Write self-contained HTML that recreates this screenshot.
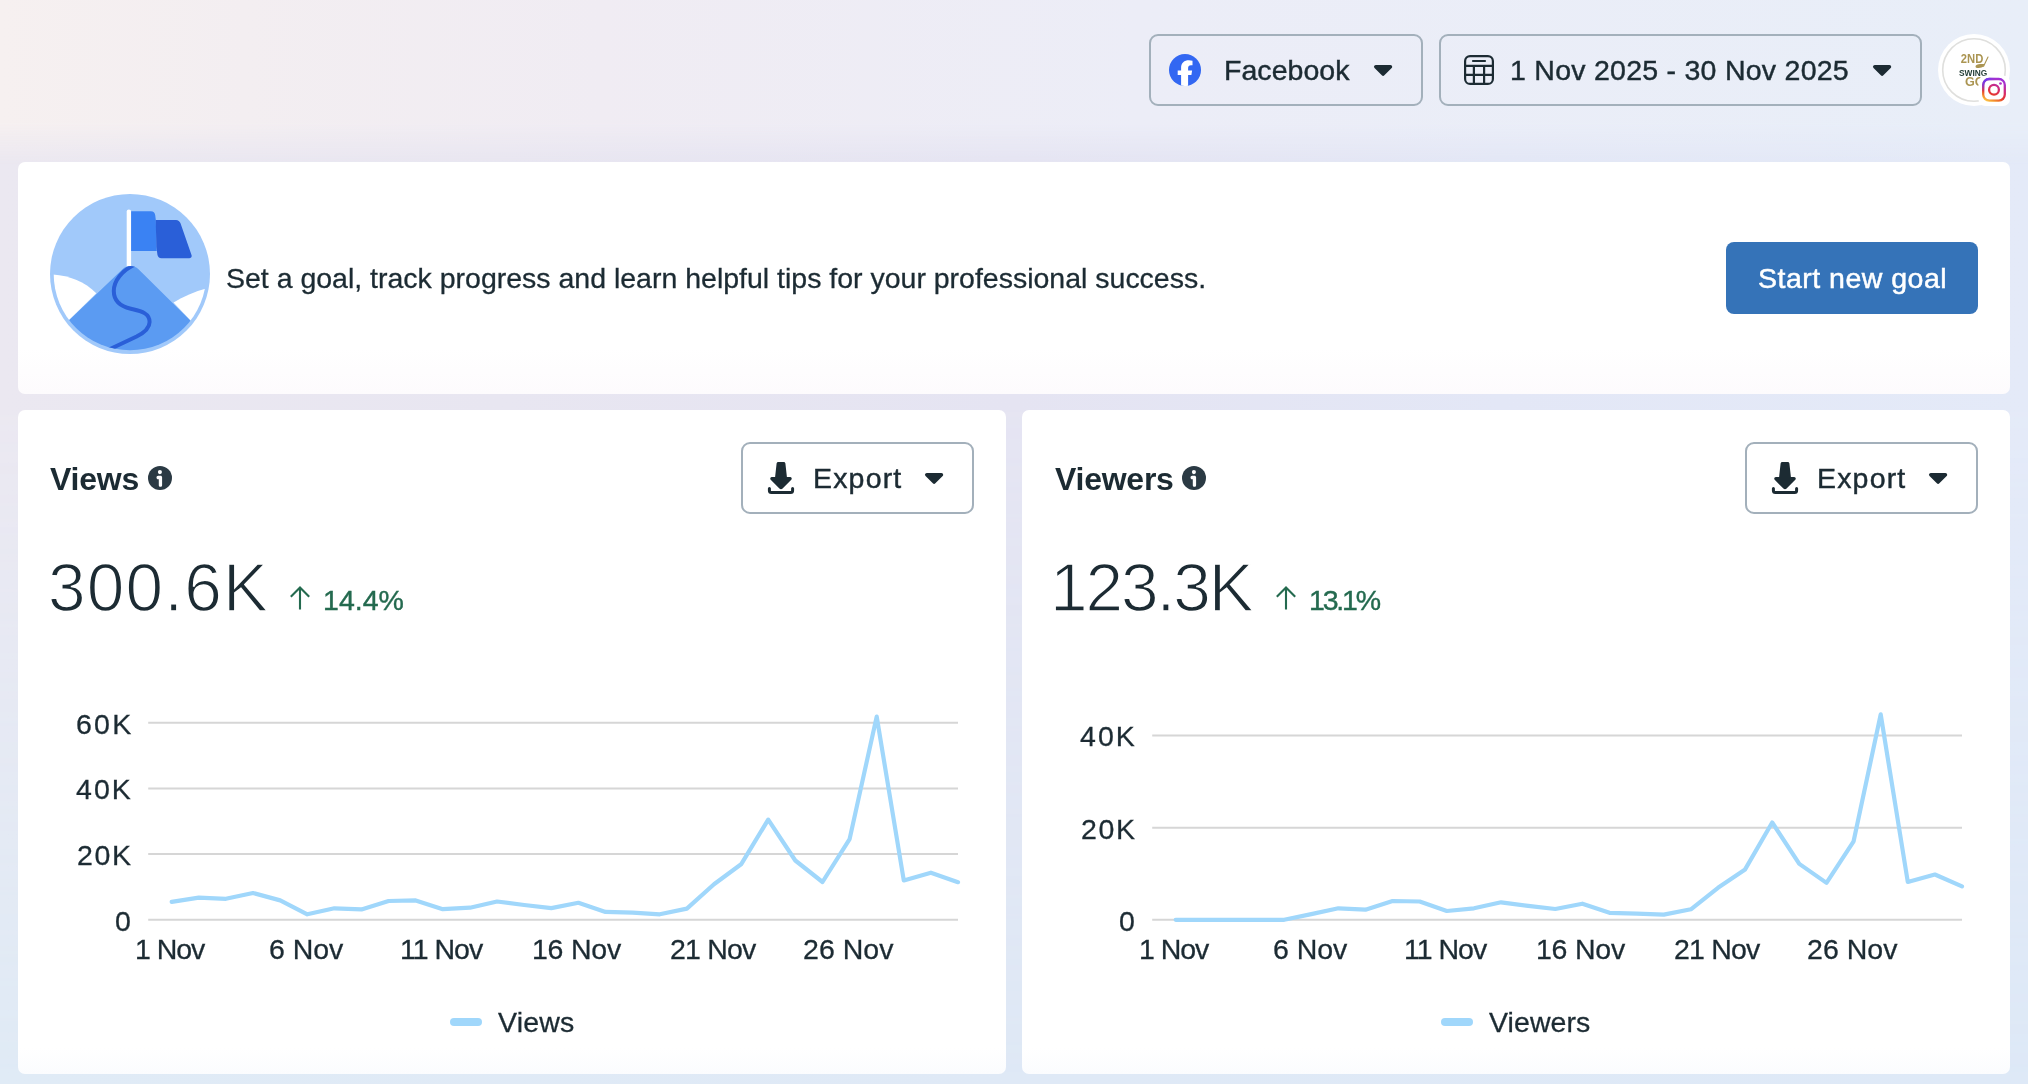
<!DOCTYPE html>
<html lang="en">
<head>
<meta charset="utf-8">
<title>Insights</title>
<style>
*{box-sizing:border-box;margin:0;padding:0}
html,body{width:2028px;height:1084px;overflow:hidden}
body{position:relative;font-family:"Liberation Sans",sans-serif;color:#1c2b33;background:#e6e6f3}
.bg{position:absolute;left:0;top:0;width:2028px;height:1084px}
#bgB{background:linear-gradient(90deg,rgb(224,235,246) 0,rgb(223,233,246) 50%,rgb(222,233,247) 100%)}
#bgM{background:linear-gradient(90deg,rgb(235,232,241) 0,rgb(232,230,241) 24.600%,rgb(229,228,242) 50%,rgb(227,231,246) 74%,rgb(228,234,248) 100%);
 -webkit-mask-image:linear-gradient(180deg,#000 0,#000 400px,rgba(0,0,0,0) 1084px);mask-image:linear-gradient(180deg,#000 0,#000 400px,rgba(0,0,0,0) 1084px)}
#bgT{height:170px;background:linear-gradient(90deg,rgb(246,240,240) 0,rgb(243,238,241) 12%,rgb(240,236,243) 29.600%,rgb(236,237,247) 56.200%,rgb(232,238,248) 100%);
 -webkit-mask-image:linear-gradient(180deg,#000 0,#000 122px,rgba(0,0,0,0) 165px);mask-image:linear-gradient(180deg,#000 0,#000 122px,rgba(0,0,0,0) 165px)}
.abs{position:absolute}
.t{position:absolute;white-space:nowrap;line-height:1;will-change:transform}
.card{position:absolute;background:linear-gradient(180deg,#fff 0,#fff calc(100% - 26px),#fbfcfe 100%);border-radius:7px}
.btn{position:absolute;border:2px solid #a3b0bb;border-radius:9px}
svg{position:absolute;overflow:visible}
.b{font-weight:700}
.m{-webkit-text-stroke:.45px #1c2b33}
.r{-webkit-text-stroke:.3px #1c2b33}
.g{color:#246a4f;-webkit-text-stroke:.4px #246a4f}
.big{-webkit-text-stroke:1.5px #fff}
</style>
</head>
<body>
<div class="bg" id="bgB"></div><div class="bg" id="bgM"></div><div class="bg" id="bgT"></div>
<div class="btn" id="fbbtn" style="left:1149px;top:34px;width:274px;height:72px"></div>
<svg id="fbicon" style="left:1169px;top:54px" width="32" height="32" viewBox="0 0 32 32">
 <circle cx="16" cy="16" r="16" fill="#3267f2"/>
 <path fill="#fff" d="M19.100 31.700V21h3.300l.7-4.400h-4v-2.500c0-1.800.8-2.900 2.900-2.900h1.500V6.700c-.9-.2-2.300-.5-3.600-.5-4.600 0-7.800 2.600-7.800 7.300v3.100H8.700V21h3.400v10.500c1.100.3 2.300.5 3.500.5s2.400-.1 3.500-.3z"/>
</svg>
<span class="t m" id="t_fb" style="left:1224.00px;top:55.77px;font-size:28.5px;letter-spacing:0.051px;">Facebook</span>
<svg class="caret" style="left:1373.8px;top:65.3px" width="19" height="11" viewBox="0 0 19 11"><path fill="#1c2b33" stroke="#1c2b33" stroke-width="3.600" stroke-linejoin="round" d="M1.800 1.800H16.400L9.100 9.100z"/></svg>
<div class="btn" id="datebtn" style="left:1439px;top:34px;width:483px;height:72px"></div>
<svg id="calicon" style="left:1463px;top:54px" width="32" height="32" viewBox="0 0 32 32" fill="none" stroke="#1c2b33" stroke-width="2.200" stroke-linecap="round">
 <rect x="2.100" y="2.100" width="27.800" height="27.800" rx="5"/>
 <path d="M10 7h12M2.100 11.900h27.800M2.100 20.800h27.800M10.900 11.900v18M21.100 11.900v18"/>
</svg>
<span class="t m" id="t_date" style="left:1510.00px;top:55.67px;font-size:28.5px;letter-spacing:0.260px;">1 Nov 2025 - 30 Nov 2025</span>
<svg class="caret" style="left:1872.7px;top:65.3px" width="19" height="11" viewBox="0 0 19 11"><path fill="#1c2b33" stroke="#1c2b33" stroke-width="3.600" stroke-linejoin="round" d="M1.800 1.800H16.400L9.100 9.100z"/></svg>
<svg id="avatar" style="left:1938px;top:34px;will-change:transform" width="72" height="72" viewBox="0 0 72 72">
 <defs>
  <linearGradient id="ig1" gradientUnits="userSpaceOnUse" x1="44.1" y1="67.8" x2="55.9" y2="41.2">
   <stop offset=".083" stop-color="#fdc850"/><stop offset=".167" stop-color="#f5a030"/><stop offset=".275" stop-color="#ef6a2c"/><stop offset=".375" stop-color="#e4352f"/><stop offset=".54" stop-color="#dc2f5c"/><stop offset=".71" stop-color="#c42a90"/><stop offset=".83" stop-color="#b030c0"/><stop offset="1" stop-color="#9c30dc"/>
  </linearGradient>
  <radialGradient id="ig2" gradientUnits="userSpaceOnUse" cx="44.1" cy="43.9" r="14">
   <stop offset="0" stop-color="#6238fa" stop-opacity="1"/><stop offset=".45" stop-color="#6a3df8" stop-opacity=".8"/><stop offset="1" stop-color="#7a3df0" stop-opacity="0"/>
  </radialGradient>
 </defs>
 <circle cx="36" cy="36" r="36" fill="#fff"/>
 <circle cx="36" cy="36" r="31.300" fill="none" stroke="#dfdfdd" stroke-width="1.600"/>
 <text x="22.800" y="29" font-family="Liberation Sans, sans-serif" font-weight="700" font-size="13" fill="#ab9552" textLength="22.500" lengthAdjust="spacingAndGlyphs">2ND</text>
 <path d="M50 23 45.600 32.300" stroke="#ab9552" stroke-width="1.100" fill="none" stroke-linecap="round"/>
 <path d="M37.500 32.400c0-1.600 2.500-2.500 5-2.400l3.800.1-.8 2.500c-1 .9-3.200 1.500-5.300 1.400-1.600-.1-2.700-.6-2.700-1.600z" fill="#ab9552"/>
 <text x="21" y="41.700" font-family="Liberation Sans, sans-serif" font-weight="700" font-size="9" fill="#1f3a33" textLength="28.200" lengthAdjust="spacingAndGlyphs">SWING</text>
 <text x="27" y="51.600" font-family="Liberation Sans, sans-serif" font-weight="700" font-size="12.600" fill="#ab9552">GC</text>
 <rect x="40.400" y="41.400" width="31.600" height="30.600" rx="7" fill="#fff"/>
 <g fill="none" stroke-width="2.300">
  <rect x="45.200" y="45" width="21.600" height="21.600" rx="6" stroke="url(#ig1)"/>
  <circle cx="56" cy="55.800" r="4.900" stroke="url(#ig1)"/>
  <rect x="45.200" y="45" width="21.600" height="21.600" rx="6" stroke="url(#ig2)"/>
 </g>
 <circle cx="62.500" cy="49.500" r="1.350" fill="#b030c8"/>
</svg>

<div class="card" id="banner" style="left:18px;top:162px;width:1992px;height:232px;background:linear-gradient(180deg,#fff 0,#fff 80%,#fdfbfd 100%)"></div>
<svg id="illus" style="left:50px;top:194px" width="160" height="160" viewBox="0 0 160 160">
 <defs><clipPath id="cin"><circle cx="80" cy="80" r="76.300"/></clipPath>
 <clipPath id="cmt"><path d="M-10 154 72.500 75.200c4.500-4.300 11.500-4.300 16 0L170 156v10H-10z"/></clipPath></defs>
 <circle cx="80" cy="80" r="80" fill="#a1c9fa"/>
 <g clip-path="url(#cin)">
  <path fill="#fff" d="M0 80.300C18 81 34 87 46.300 99.200L18 127 0 127z"/>
  <path fill="#fff" d="M160 93.500C146 97 134 102 123.500 108.500L142 128h18z"/>
  <rect x="76.700" y="15.400" width="4.400" height="60" rx="2.200" fill="#fff"/>
  <path fill="#5b9bf2" d="M-10 154 72.500 75.200c4.500-4.300 11.500-4.300 16 0L170 156v10H-10z"/>
  <g clip-path="url(#cmt)"><path fill="none" stroke="#2a5fd8" stroke-width="4" d="M86 70C72 76 63.800 87 63.800 97c0 10 6.500 15.300 17 17.800 9 2.200 18.800 3.700 18.800 13.200 0 7-6 11-13 14.500L58 156"/></g>
 </g>
 <path fill="#3a82f3" d="M81.100 17.300h19.800c2.500 0 3.900 1.600 4.300 4l.6 4.600.9 31.200H81.100z"/>
 <path fill="#2a5fd8" d="M105.700 25.900h20.300c2.200 0 3.700 1.300 4.500 3.400l11 31.700c.6 1.700-.4 3.200-2.200 3.200h-27.900c-2.200 0-3.700-1.500-4-3.700l-1-7.600z"/>
</svg>
<span class="t r" id="t_banner" style="left:226.00px;top:264.27px;font-size:28.5px;letter-spacing:-0.006px;">Set a goal, track progress and learn helpful tips for your professional success.</span>
<div class="abs" id="goalbtn" style="left:1726px;top:242px;width:252px;height:72px;border-radius:8px;background:#3573b8"></div>
<span class="t " id="t_goal" style="left:1758.00px;top:264.27px;font-size:28.5px;letter-spacing:0.493px;color:#fff;-webkit-text-stroke:.5px #fff;">Start new goal</span>
<div class="card" id="card_v" style="left:18px;top:410px;width:988px;height:664px"></div>
<span class="t b" id="t_v" style="left:50.00px;top:462.81px;font-size:32px;letter-spacing:-0.232px;">Views</span>
<svg class="info" style="left:148px;top:466px" width="24" height="24" viewBox="0 0 24 24"><circle cx="12" cy="12" r="12" fill="#2b3a44"/><circle cx="11.900" cy="6.100" r="2.050" fill="#fff"/><path fill="#fff" d="M10.200 9.700h2.300c.9 0 1.600.7 1.600 1.600v7.900c0 .9-.75 1.650-1.650 1.650S10.800 20.100 10.800 19.200v-5.900h-.6c-1 0-1.700-.8-1.700-1.800s.7-1.800 1.700-1.800z"/></svg>
<div class="btn" style="left:741px;top:442px;width:233px;height:72px"></div>
<svg class="dl" style="left:766px;top:460px" width="32" height="36" viewBox="0 0 32 36"><path fill="#1c2b33" d="M12.300 2h5.400c.9 0 1.600.6 1.700 1.500L20.900 17h3.200c1.500 0 2.200 1.700 1.200 2.800l-8.700 8.800c-.9.9-2.300.9-3.200 0l-8.700-8.800c-1-1.100-.3-2.800 1.200-2.800h3.200l1.500-13.500c.1-.9.800-1.500 1.700-1.500z"/><path fill="none" stroke="#1c2b33" stroke-width="3" stroke-linecap="round" stroke-linejoin="round" d="M3.400 28.400v2.100c0 1.100.9 2 2 2h19.200c1.100 0 2-.9 2-2v-2.100"/></svg>
<span class="t m" id="t_exp_v" style="left:813.00px;top:463.87px;font-size:28.5px;letter-spacing:1.175px;">Export</span>
<svg class="caret" style="left:924.9px;top:473.1px" width="19" height="11" viewBox="0 0 19 11"><path fill="#1c2b33" stroke="#1c2b33" stroke-width="3.600" stroke-linejoin="round" d="M1.800 1.800H16.400L9.100 9.100z"/></svg>
<span class="t big" id="t_big_v" style="left:48.00px;top:553.53px;font-size:67.6px;letter-spacing:1.195px;">300.6K</span>
<svg style="left:289px;top:585px" width="22" height="26" viewBox="0 0 22 26" fill="none" stroke="#246a4f" stroke-width="2.100" stroke-linejoin="miter"><path d="M11 2.800v21.800M1.800 11.800 11 2.600l9.200 9.200"/></svg>
<span class="t g" id="t_pct_v" style="left:323.00px;top:585.77px;font-size:28.5px;letter-spacing:0.032px;">14.4%</span>
<svg id="chart_v" style="left:0;top:0" width="2028" height="1084" viewBox="0 0 2028 1084"><path d="M148.2 722.8H958.0" stroke="#d6d6d6" stroke-width="2"/><path d="M148.2 788.5H958.0" stroke="#d6d6d6" stroke-width="2"/><path d="M148.2 854.1H958.0" stroke="#d6d6d6" stroke-width="2"/><path d="M148.2 919.7H958.0" stroke="#d6d6d6" stroke-width="2"/><polyline points="171.7,901.9 198.8,897.7 225.9,898.8 253.0,893.0 280.2,900.4 307.3,914.3 334.4,908.3 361.5,909.4 388.6,901.0 415.7,900.4 442.8,909.2 470.0,907.7 497.1,901.5 524.2,905.0 551.3,908.1 578.4,902.8 605.5,911.9 632.7,912.6 659.8,914.3 686.9,908.6 714.0,884.2 741.1,864.3 768.2,819.6 795.3,860.5 822.5,882.0 849.6,839.1 876.7,716.6 903.8,880.5 930.9,872.7 958.0,882.2" fill="none" stroke="#a0d7fb" stroke-width="4.200" stroke-linejoin="round" stroke-linecap="round"/></svg>
<span class="t r" id="t_y60K_v" style="left:76.00px;top:709.67px;font-size:28.5px;letter-spacing:2.242px;">60K</span>
<span class="t r" id="t_y40K_v" style="left:76.00px;top:775.37px;font-size:28.5px;letter-spacing:2.076px;">40K</span>
<span class="t r" id="t_y20K_v" style="left:77.00px;top:840.97px;font-size:28.5px;letter-spacing:1.663px;">20K</span>
<span class="t r" id="t_y0_v" style="left:115.00px;top:906.57px;font-size:28.5px;letter-spacing:0.000px;">0</span>
<span class="t r" id="t_x0_v" style="left:135.00px;top:934.57px;font-size:28.5px;letter-spacing:-1.031px;">1 Nov</span>
<span class="t r" id="t_x1_v" style="left:269.00px;top:934.57px;font-size:28.5px;letter-spacing:-0.065px;">6 Nov</span>
<span class="t r" id="t_x2_v" style="left:400.00px;top:934.57px;font-size:28.5px;letter-spacing:-1.011px;">11 Nov</span>
<span class="t r" id="t_x3_v" style="left:532.00px;top:934.57px;font-size:28.5px;letter-spacing:-0.233px;">16 Nov</span>
<span class="t r" id="t_x4_v" style="left:670.00px;top:934.57px;font-size:28.5px;letter-spacing:-0.806px;">21 Nov</span>
<span class="t r" id="t_x5_v" style="left:803.00px;top:934.57px;font-size:28.5px;letter-spacing:0.040px;">26 Nov</span>
<div class="abs" style="left:450px;top:1018px;width:32px;height:8px;border-radius:4px;background:#a0d7fb"></div>
<span class="t r" id="t_lg_v" style="left:498.00px;top:1007.77px;font-size:28.5px;letter-spacing:0.186px;">Views</span>
<div class="card" id="card_w" style="left:1022px;top:410px;width:988px;height:664px"></div>
<span class="t b" id="t_w" style="left:1055.00px;top:462.81px;font-size:32px;letter-spacing:-0.250px;">Viewers</span>
<svg class="info" style="left:1182.3px;top:466px" width="24" height="24" viewBox="0 0 24 24"><circle cx="12" cy="12" r="12" fill="#2b3a44"/><circle cx="11.900" cy="6.100" r="2.050" fill="#fff"/><path fill="#fff" d="M10.200 9.700h2.300c.9 0 1.600.7 1.600 1.600v7.900c0 .9-.75 1.650-1.650 1.650S10.800 20.100 10.800 19.200v-5.900h-.6c-1 0-1.700-.8-1.700-1.800s.7-1.800 1.700-1.800z"/></svg>
<div class="btn" style="left:1745px;top:442px;width:233px;height:72px"></div>
<svg class="dl" style="left:1770px;top:460px" width="32" height="36" viewBox="0 0 32 36"><path fill="#1c2b33" d="M12.300 2h5.400c.9 0 1.600.6 1.700 1.500L20.900 17h3.200c1.500 0 2.200 1.700 1.200 2.800l-8.700 8.800c-.9.9-2.300.9-3.200 0l-8.700-8.800c-1-1.100-.3-2.800 1.200-2.800h3.200l1.500-13.500c.1-.9.800-1.500 1.700-1.500z"/><path fill="none" stroke="#1c2b33" stroke-width="3" stroke-linecap="round" stroke-linejoin="round" d="M3.400 28.400v2.100c0 1.100.9 2 2 2h19.200c1.100 0 2-.9 2-2v-2.100"/></svg>
<span class="t m" id="t_exp_w" style="left:1817.00px;top:463.87px;font-size:28.5px;letter-spacing:1.175px;">Export</span>
<svg class="caret" style="left:1928.9px;top:473.1px" width="19" height="11" viewBox="0 0 19 11"><path fill="#1c2b33" stroke="#1c2b33" stroke-width="3.600" stroke-linejoin="round" d="M1.800 1.800H16.400L9.100 9.100z"/></svg>
<span class="t big" id="t_big_w" style="left:1050.00px;top:553.53px;font-size:67.6px;letter-spacing:-2.068px;">123.3K</span>
<svg style="left:1275px;top:585px" width="22" height="26" viewBox="0 0 22 26" fill="none" stroke="#246a4f" stroke-width="2.100" stroke-linejoin="miter"><path d="M11 2.800v21.800M1.800 11.800 11 2.600l9.200 9.200"/></svg>
<span class="t g" id="t_pct_w" style="left:1309.00px;top:585.77px;font-size:28.5px;letter-spacing:-2.190px;">13.1%</span>
<svg id="chart_w" style="left:0;top:0" width="2028" height="1084" viewBox="0 0 2028 1084"><path d="M1152.2 735.5H1962.0" stroke="#d6d6d6" stroke-width="2"/><path d="M1152.2 827.8H1962.0" stroke="#d6d6d6" stroke-width="2"/><path d="M1152.2 919.7H1962.0" stroke="#d6d6d6" stroke-width="2"/><polyline points="1175.7,919.8 1202.8,919.8 1229.9,919.8 1257.0,919.8 1284.2,919.8 1311.3,914.1 1338.4,908.3 1365.5,909.7 1392.6,901.0 1419.7,901.5 1446.8,911.0 1474.0,908.3 1501.1,902.3 1528.2,905.9 1555.3,909.0 1582.4,903.7 1609.5,912.8 1636.7,913.7 1663.8,914.6 1690.9,909.3 1718.0,887.8 1745.1,869.4 1772.2,822.5 1799.3,863.9 1826.5,882.9 1853.6,841.3 1880.7,714.4 1907.8,882.0 1934.9,874.5 1962.0,886.4" fill="none" stroke="#a0d7fb" stroke-width="4.200" stroke-linejoin="round" stroke-linecap="round"/></svg>
<span class="t r" id="t_y40K_w" style="left:1080.00px;top:722.37px;font-size:28.5px;letter-spacing:2.076px;">40K</span>
<span class="t r" id="t_y20K_w" style="left:1081.00px;top:814.67px;font-size:28.5px;letter-spacing:1.663px;">20K</span>
<span class="t r" id="t_y0_w" style="left:1119.00px;top:906.57px;font-size:28.5px;letter-spacing:0.000px;">0</span>
<span class="t r" id="t_x0_w" style="left:1139.00px;top:934.57px;font-size:28.5px;letter-spacing:-1.031px;">1 Nov</span>
<span class="t r" id="t_x1_w" style="left:1273.00px;top:934.57px;font-size:28.5px;letter-spacing:-0.065px;">6 Nov</span>
<span class="t r" id="t_x2_w" style="left:1404.00px;top:934.57px;font-size:28.5px;letter-spacing:-1.011px;">11 Nov</span>
<span class="t r" id="t_x3_w" style="left:1536.00px;top:934.57px;font-size:28.5px;letter-spacing:-0.233px;">16 Nov</span>
<span class="t r" id="t_x4_w" style="left:1674.00px;top:934.57px;font-size:28.5px;letter-spacing:-0.806px;">21 Nov</span>
<span class="t r" id="t_x5_w" style="left:1807.00px;top:934.57px;font-size:28.5px;letter-spacing:0.040px;">26 Nov</span>
<div class="abs" style="left:1441px;top:1018px;width:32px;height:8px;border-radius:4px;background:#a0d7fb"></div>
<span class="t r" id="t_lg_w" style="left:1489.00px;top:1007.77px;font-size:28.5px;letter-spacing:0.077px;">Viewers</span>
</body>
</html>
